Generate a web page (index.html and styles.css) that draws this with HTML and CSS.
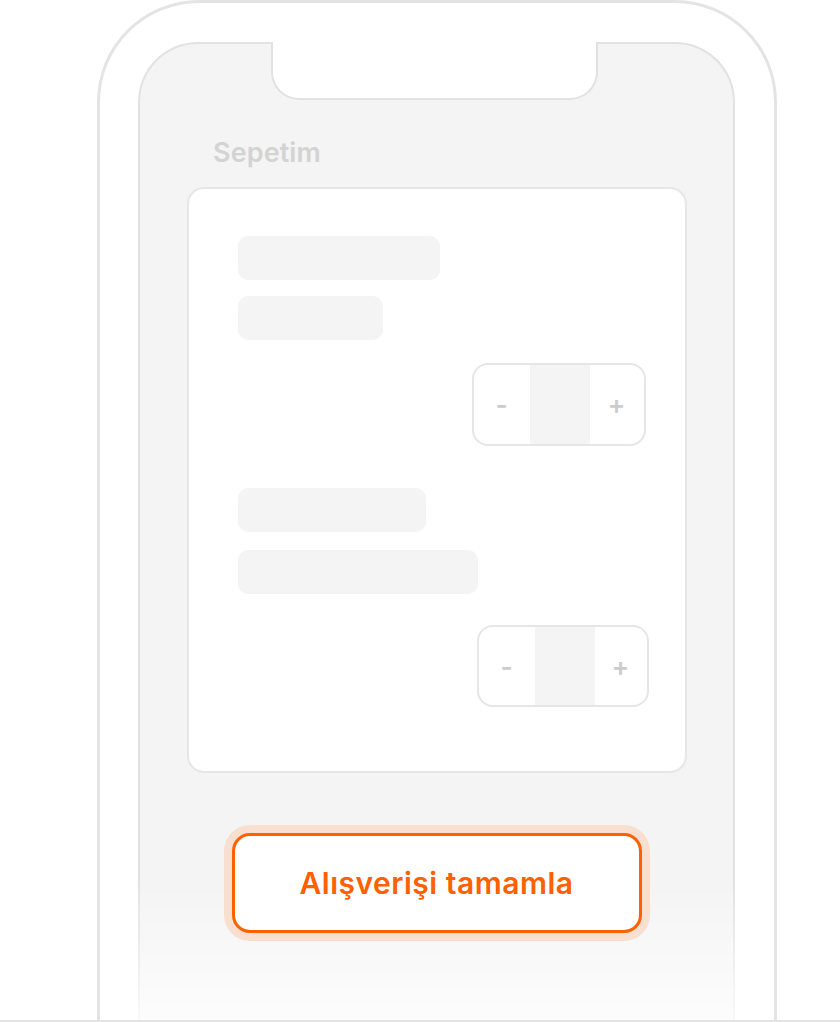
FILE: index.html
```html
<!DOCTYPE html>
<html lang="tr">
<head>
<meta charset="utf-8">
<title>Sepetim</title>
<link rel="stylesheet" href="styles.css">
</head>
<body>
<div class="stage">
  <div class="phone">
    <div class="screen">
      <div class="notch"></div>
      <h1 class="title">Sepetim</h1>
      <div class="card">
        <div class="item item--first">
          <div class="bar bar--w202"></div>
          <div class="bar bar--w145"></div>
          <div class="stepper">
            <span class="stepper__btn">-</span>
            <span class="stepper__value"></span>
            <span class="stepper__btn">+</span>
          </div>
        </div>
        <div class="item item--second">
          <div class="bar bar--w188"></div>
          <div class="bar bar--w240"></div>
          <div class="stepper">
            <span class="stepper__btn">-</span>
            <span class="stepper__value"></span>
            <span class="stepper__btn">+</span>
          </div>
        </div>
      </div>
      <div class="actions">
        <button class="checkout">Alışverişi tamamla</button>
      </div>
      <div class="fade"></div>
    </div>
  </div>
</div>
</body>
</html>
```

FILE: styles.css
```css
* { box-sizing: border-box; }

html, body {
  margin: 0;
  padding: 0;
  background: #ffffff;
  font-family: Inter, "Noto Sans", "Liberation Sans", sans-serif;
}

.stage {
  width: 840px;
  height: 1022px;
  overflow: hidden;
  border-bottom: 2px solid #e4e4e4;
}

.phone {
  margin-left: 97px;
  width: 680px;
  height: 1200px;
  border: 3px solid #e4e4e4;
  border-bottom: none;
  border-radius: 102px 102px 0 0;
  padding: 39px 0 0 38px;
  background: #ffffff;
}

.screen {
  position: relative;
  width: 597px;
  height: 1100px;
  border: 2px solid #e2e2e2;
  border-bottom: none;
  border-radius: 60px 60px 0 0;
  background: #f4f4f4;
  padding-top: 92px;
}

.notch {
  position: absolute;
  top: -2px;
  left: 131px;
  width: 327px;
  height: 58px;
  background: #ffffff;
  border: 2px solid #e2e2e2;
  border-top: none;
  border-radius: 0 0 28px 28px;
}

.title {
  margin: 0 0 0 73px;
  font-size: 27px;
  line-height: 34px;
  font-weight: 600;
  color: #d3d3d3;
  letter-spacing: 0.1px;
}

.card {
  margin: 17px auto 0;
  width: 500px;
  background: #ffffff;
  border: 2px solid #e6e6e6;
  border-radius: 17px;
  padding: 47px 36px 64px 49px;
  display: flex;
  flex-direction: column;
}

.item {
  display: flex;
  flex-direction: column;
}

.bar {
  height: 44px;
  background: #f4f4f4;
  border-radius: 10px;
}

.bar--w202 { width: 202px; }
.bar--w145 { width: 145px; margin-top: 16px; }
.bar--w188 { width: 188px; }
.bar--w240 { width: 240px; margin-top: 18px; }

.item--second { margin-top: 42px; }

.stepper {
  align-self: flex-end;
  display: grid;
  grid-template-columns: 56px 60px 1fr;
  width: 174px;
  height: 83px;
  border: 2px solid #e6e6e6;
  border-radius: 16px;
  overflow: hidden;
  background: #ffffff;
}

.item--first .stepper { margin-top: 23px; margin-right: 3px; }
.item--second .stepper { margin-top: 31px; width: 172px; height: 82px; }

.stepper__btn {
  display: flex;
  align-items: center;
  justify-content: center;
  font-size: 26px;
  font-weight: 600;
  color: #cccccc;
}

.stepper__value {
  background: #f4f4f4;
}

.actions {
  position: relative;
  z-index: 1;
  display: flex;
  justify-content: center;
  margin-top: 60px;
}

.checkout {
  width: 410px;
  height: 100px;
  background: #ffffff;
  border: 3px solid #ff6000;
  border-radius: 18px;
  box-shadow: 0 0 0 8px #f8dfd0;
  font-family: Inter, "Noto Sans", "Liberation Sans", sans-serif;
  font-size: 30px;
  letter-spacing: 0.5px;
  font-weight: 600;
  color: #ff6000;
  padding: 0;
  cursor: pointer;
}

.fade {
  position: absolute;
  left: -2px;
  right: -2px;
  top: 838px;
  height: 200px;
  background: linear-gradient(to bottom, rgba(255,255,255,0) 0%, rgba(255,255,255,0.85) 75%, rgba(255,255,255,0.9) 100%);
}
```
